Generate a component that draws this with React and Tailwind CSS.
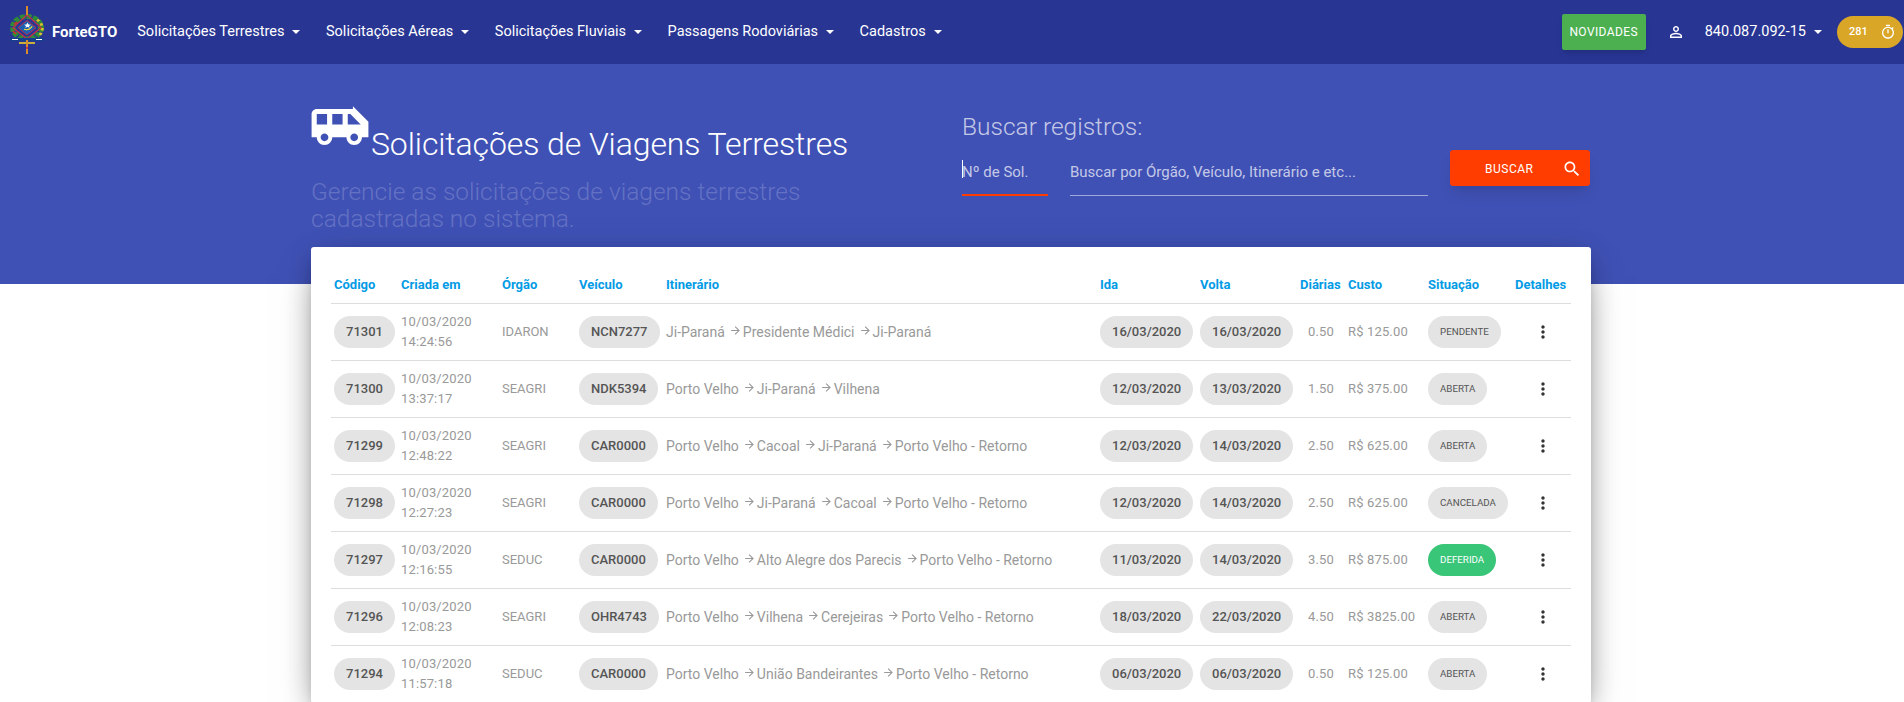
import React from 'react';

const rows = [
  { id: '71301', date: '10/03/2020', time: '14:24:56', org: 'IDARON', car: 'NCN7277', route: ['Ji-Paraná', 'Presidente Médici', 'Ji-Paraná'], go: '16/03/2020', back: '16/03/2020', days: '0.50', cost: 'R$ 125.00', status: 'PENDENTE' },
  { id: '71300', date: '10/03/2020', time: '13:37:17', org: 'SEAGRI', car: 'NDK5394', route: ['Porto Velho', 'Ji-Paraná', 'Vilhena'], go: '12/03/2020', back: '13/03/2020', days: '1.50', cost: 'R$ 375.00', status: 'ABERTA' },
  { id: '71299', date: '10/03/2020', time: '12:48:22', org: 'SEAGRI', car: 'CAR0000', route: ['Porto Velho', 'Cacoal', 'Ji-Paraná', 'Porto Velho - Retorno'], go: '12/03/2020', back: '14/03/2020', days: '2.50', cost: 'R$ 625.00', status: 'ABERTA' },
  { id: '71298', date: '10/03/2020', time: '12:27:23', org: 'SEAGRI', car: 'CAR0000', route: ['Porto Velho', 'Ji-Paraná', 'Cacoal', 'Porto Velho - Retorno'], go: '12/03/2020', back: '14/03/2020', days: '2.50', cost: 'R$ 625.00', status: 'CANCELADA' },
  { id: '71297', date: '10/03/2020', time: '12:16:55', org: 'SEDUC', car: 'CAR0000', route: ['Porto Velho', 'Alto Alegre dos Parecis', 'Porto Velho - Retorno'], go: '11/03/2020', back: '14/03/2020', days: '3.50', cost: 'R$ 875.00', status: 'DEFERIDA' },
  { id: '71296', date: '10/03/2020', time: '12:08:23', org: 'SEAGRI', car: 'OHR4743', route: ['Porto Velho', 'Vilhena', 'Cerejeiras', 'Porto Velho - Retorno'], go: '18/03/2020', back: '22/03/2020', days: '4.50', cost: 'R$ 3825.00', status: 'ABERTA' },
  { id: '71294', date: '10/03/2020', time: '11:57:18', org: 'SEDUC', car: 'CAR0000', route: ['Porto Velho', 'União Bandeirantes', 'Porto Velho - Retorno'], go: '06/03/2020', back: '06/03/2020', days: '0.50', cost: 'R$ 125.00', status: 'ABERTA' },
];

const menu = ['Solicitações Terrestres', 'Solicitações Aéreas', 'Solicitações Fluviais', 'Passagens Rodoviárias', 'Cadastros'];

const gridCols = 'grid grid-cols-[67px_101px_77px_87px_434px_100px_100px_48px_80px_87px_56px] pl-[3px]';

const Icon = ({ d, size, className }) => (
  <svg width={size} height={size} viewBox="0 0 24 24" fill="currentColor" className={className}>
    <path d={d} />
  </svg>
);

const Caret = () => (
  <span className="ml-2 h-0 w-0 border-x-4 border-t-4 border-x-transparent border-t-white" />
);

const Chip = ({ children }) => (
  <span className="inline-flex h-8 items-center rounded-full bg-[#e4e4e4] px-3 text-[13px] font-medium text-[#555]">
    {children}
  </span>
);

// status chips use smaller caps, and the approved one is green
const StatusChip = ({ status }) => (
  <span
    className={
      status === 'DEFERIDA'
        ? 'inline-flex h-8 items-center rounded-full bg-[#39c678] px-3 text-[9.75px] text-white'
        : 'inline-flex h-8 items-center rounded-full bg-[#e4e4e4] px-3 text-[9.75px] text-[#555]'
    }
  >
    {status}
  </span>
);

const Logo = () => (
  <svg width="38" height="48" viewBox="0 0 38 48" className="mb-[5px] shrink-0">
    <g transform="translate(0 6.5) scale(1 0.8)">
      <circle cx="19" cy="19" r="14" fill="none" stroke="#2e8b3a" strokeWidth="6" strokeDasharray="5 1.5" />
      <path d="M29 9a14 14 0 0 1 2 20" fill="none" stroke="#d8c22e" strokeWidth="3" strokeDasharray="3 3" />
      <path d="M8 27l-3-4M9 12l-3 3" stroke="#c0392b" strokeWidth="2" />
      <path d="M19 3L33 19L19 33L5 19Z" fill="none" stroke="#c4304a" strokeWidth="1.4" />
      <path d="M19 10L28 19L19 28L10 19Z" fill="#1c5fb0" stroke="#c4304a" />
      <path d="M16 21a5.5 5.5 0 0 0 8-4a6 6 0 0 1-8 4Z" fill="#f2d33a" stroke="#f2d33a" />
      <path d="M19.500 12.500l1 2.600 2.500.1-2 1.600.7 2.500-2.200-1.500-2.200 1.500.7-2.500-2-1.600 2.500-.1Z" fill="#fff" />
    </g>
    <rect x="2" y="32" width="34" height="3" fill="#14408c" />
    <rect x="4" y="33" width="6" height="1" fill="#fff" />
    <rect x="28" y="33" width="6" height="1" fill="#fff" />
    <rect x="11" y="36" width="16" height="2" fill="#c9b03a" />
    <rect x="18" y="0" width="2" height="9" fill="#d98b2b" />
    <rect x="18" y="34" width="2" height="14" fill="#d98b2b" />
    <rect x="18" y="41" width="2" height="2" fill="#c4304a" />
  </svg>
);

const NavBar = () => (
  <nav className="flex h-16 items-center bg-[#283593] text-white">
    <div className="ml-[8px] flex items-center">
      <Logo />
      <span className="ml-[6px] text-[15px] font-bold">ForteGTO</span>
    </div>
    <ul className="ml-[20px] flex items-center gap-[25.5px] text-[14.5px]">
      {menu.map((m) => (
        <li key={m} className="flex items-center">
          {m}
          <Caret />
        </li>
      ))}
    </ul>
    <div className="ml-auto flex items-center">
      <button className="h-9 w-[84px] rounded-[2px] bg-[#4caf50] text-xs tracking-[0.4px] shadow-md">NOVIDADES</button>
      <Icon
        size={18}
        className="ml-[21px]"
        d="M12 5.900c1.160 0 2.100.940 2.100 2.100s-.940 2.100-2.100 2.100S9.900 9.160 9.900 8s.940-2.100 2.100-2.100m0 9c2.970 0 6.100 1.460 6.100 2.100v1.100H5.900V17c0-.640 3.130-2.100 6.100-2.100M12 4C9.790 4 8 5.790 8 8s1.790 4 4 4 4-1.790 4-4-1.790-4-4-4zm0 9c-2.670 0-8 1.340-8 4v3h16v-3c0-2.660-5.330-4-8-4z"
      />
      <span className="ml-5 flex items-center text-[14.5px]">
        840.087.092-15
        <Caret />
      </span>
      <span className="ml-[15px] mr-px flex h-8 w-[66px] items-center rounded-full bg-[#daa628] pl-[12px] text-[11px] font-medium">
        281
        <Icon
          size={16}
          className="ml-[12px]"
          d="M15 1H9v2h6V1zm-4 13h2V8h-2v6zm8.030-6.610l1.420-1.420c-.430-.510-.900-.990-1.410-1.410l-1.420 1.420C16.070 4.740 14.120 4 12 4c-4.970 0-9 4.030-9 9s4.020 9 9 9 9-4.030 9-9c0-2.120-.740-4.070-1.970-5.610zM12 20c-3.870 0-7-3.130-7-7s3.130-7 7-7 7 3.130 7 7-3.130 7-7 7z"
        />
      </span>
    </div>
  </nav>
);

const Hero = () => (
  <header className="h-[220px] bg-[#3f51b5]">
    <div className="ml-[311px] flex w-[1280px]">
      <div className="w-[651px] pt-[32px]">
        <div className="flex items-end">
          <Icon
            size={62}
            className="-ml-[2px] text-white"
            d="M17 5H3c-1.100 0-2 .890-2 2v9h2c0 1.650 1.340 3 3 3s3-1.350 3-3h5.500c0 1.650 1.340 3 3 3s3-1.350 3-3H23v-6l-6-6zM3 11V7h4v4H3zm3 6.500c-.830 0-1.500-.670-1.500-1.500s.670-1.500 1.500-1.500 1.500.670 1.500 1.500-.670 1.500-1.500 1.500zM13 11H9V7h4v4zm4.500 6.500c-.830 0-1.500-.670-1.500-1.500s.670-1.500 1.500-1.500 1.500.670 1.500 1.500-.670 1.500-1.500 1.500zM15 11V7h1l4 4h-5z"
          />
          <h1 className="mb-[-6px] text-[32px] leading-[40px] font-light tracking-[-0.1px] text-white">Solicitações de Viagens Terrestres</h1>
        </div>
        <p className="mt-[20px] w-[520px] text-[24.5px] leading-[27px] font-light text-white/20">
          Gerencie as solicitações de viagens terrestres cadastradas no sistema.
        </p>
      </div>
      <div className="pt-[49px]">
        <h2 className="text-[24.5px] leading-7 font-light text-white/70">Buscar registros:</h2>
        <div className="flex">
          <div className="relative mt-[19px] h-[36px] w-[86px] border-b-2 border-[#ff3d00] pt-[2px] text-[15px] leading-5 text-white/70">
            <span className="absolute top-0 left-0 h-[18px] w-px bg-white" />
            Nº de Sol.
          </div>
          <div className="mt-[19px] ml-[22px] h-[36px] w-[358px] border-b border-white/50 pt-[2px] text-[15px] leading-5 text-white/70">
            Buscar por Órgão, Veículo, Itinerário e etc...
          </div>
          <button className="mt-[9px] ml-[22px] flex h-9 w-[140px] items-center rounded-[3px] bg-[#ff3d00] pt-px pl-[35px] text-xs tracking-[0.5px] text-white shadow-lg">
            BUSCAR
            <Icon
              size={20}
              className="ml-[29px]"
              d="M15.500 14h-.790l-.280-.270C15.410 12.590 16 11.110 16 9.500 16 5.910 13.090 3 9.500 3S3 5.910 3 9.500 5.910 16 9.500 16c1.610 0 3.090-.590 4.230-1.570l.270.280v.790l5 4.990L20.490 19l-4.990-5zm-6 0C7.010 14 5 11.990 5 9.500S7.010 5 9.500 5 14 7.010 14 9.500 11.990 14 9.500 14z"
            />
          </button>
        </div>
      </div>
    </div>
  </header>
);

const Route = ({ stops }) => (
  <span className="flex items-center text-sm text-[#999]">
    {stops.map((s, i) => (
      <React.Fragment key={i}>
        {i > 0 && (
          <Icon
            size={13}
            className="mr-[1px] ml-[4px] -translate-y-[2px]"
            d="M12 4l-1.410 1.410L16.170 11H4v2h12.170l-5.580 5.590L12 20l8-8z"
          />
        )}
        {s}
      </React.Fragment>
    ))}
  </span>
);

const Row = ({ r }) => (
  <div className={`${gridCols} h-[57px] items-center border-b border-[#ddd] text-[13px] text-[#999]`}>
    <div><Chip>{r.id}</Chip></div>
    <div className="leading-5 tracking-[0.15px]">{r.date}<br />{r.time}</div>
    <div>{r.org}</div>
    <div><Chip>{r.car}</Chip></div>
    <Route stops={r.route} />
    <div><Chip>{r.go}</Chip></div>
    <div><Chip>{r.back}</Chip></div>
    <div className="pl-2 tracking-[0.15px]">{r.days}</div>
    <div className="tracking-[0.15px]">{r.cost}</div>
    <div><StatusChip status={r.status} /></div>
    <div className="flex justify-center text-[#333]">
      <Icon size={20} d="M12 8c1.100 0 2-.900 2-2s-.900-2-2-2-2 .900-2 2 .900 2 2 2zm0 2c-1.100 0-2 .900-2 2s.900 2 2 2 2-.900 2-2-.900-2-2-2zm0 6c-1.100 0-2 .900-2 2s.900 2 2 2 2-.900 2-2-.900-2-2-2z" />
    </div>
  </div>
);

const heads = ['Código', 'Criada em', 'Órgão', 'Veículo', 'Itinerário', 'Ida', 'Volta', 'Diárias', 'Custo', 'Situação', 'Detalhes'];

export default function App() {
  return (
    <div className="h-[702px] overflow-hidden bg-white font-['Roboto',sans-serif]">
      <NavBar />
      <Hero />
      <main className="-mt-[37px] ml-[311px] w-[1280px] rounded-[3px] bg-white px-5 shadow-[0_16px_38px_-12px_rgba(0,0,0,0.56),0_4px_25px_0_rgba(0,0,0,0.12),0_8px_10px_-5px_rgba(0,0,0,0.2)]">
        <div className={`${gridCols} h-[57px] items-end border-b border-[#ddd] pb-[4px] text-[13px] font-bold text-[#039be5]`}>
          {heads.map((h) => (
            <div key={h} className="pb-[5px]">{h}</div>
          ))}
        </div>
        {rows.map((r) => (
          <Row key={r.id} r={r} />
        ))}
      </main>
    </div>
  );
}
